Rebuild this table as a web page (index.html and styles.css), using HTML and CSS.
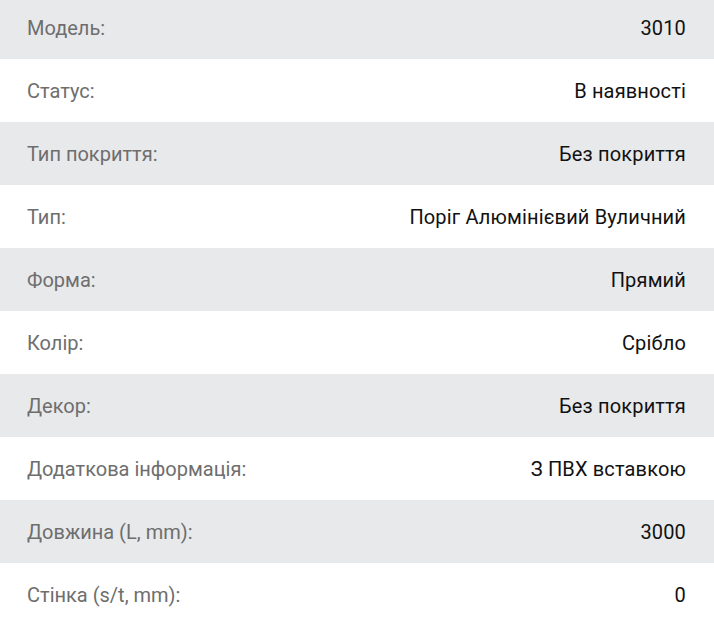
FILE: index.html
```html
<!DOCTYPE html>
<html lang="uk">
<head>
<meta charset="utf-8">
<link rel="stylesheet" href="styles.css">
</head>
<body>
<div class="specs">
  <div class="row"><span class="label">Модель:</span><span class="value">3010</span></div>
  <div class="row"><span class="label">Статус:</span><span class="value">В наявності</span></div>
  <div class="row"><span class="label">Тип покриття:</span><span class="value">Без покриття</span></div>
  <div class="row"><span class="label">Тип:</span><span class="value">Поріг Алюмінієвий Вуличний</span></div>
  <div class="row"><span class="label">Форма:</span><span class="value">Прямий</span></div>
  <div class="row"><span class="label">Колір:</span><span class="value">Срібло</span></div>
  <div class="row"><span class="label">Декор:</span><span class="value">Без покриття</span></div>
  <div class="row"><span class="label">Додаткова інформація:</span><span class="value">З ПВХ вставкою</span></div>
  <div class="row"><span class="label">Довжина (L, mm):</span><span class="value">3000</span></div>
  <div class="row"><span class="label">Стінка (s/t, mm):</span><span class="value">0</span></div>
</div>
</body>
</html>
```
FILE: styles.css
```css
html, body {
  margin: 0;
  padding: 0;
  background: #ffffff;
}
body {
  font-family: Roboto, "Liberation Sans", Arial, sans-serif;
  font-size: 20px;
  overflow: hidden;
}
.specs {
  margin-top: -4px;
  display: flex;
  flex-direction: column;
}
.row {
  height: 63px;
  display: flex;
  align-items: center;
  justify-content: space-between;
  padding: 0 28px 0 27px;
  box-sizing: border-box;
}
.row:nth-child(odd) {
  background: #e8e9eb;
}
.label {
  color: #6e6e6e;
}
.value {
  color: #111111;
  letter-spacing: 0.15px;
}
```
